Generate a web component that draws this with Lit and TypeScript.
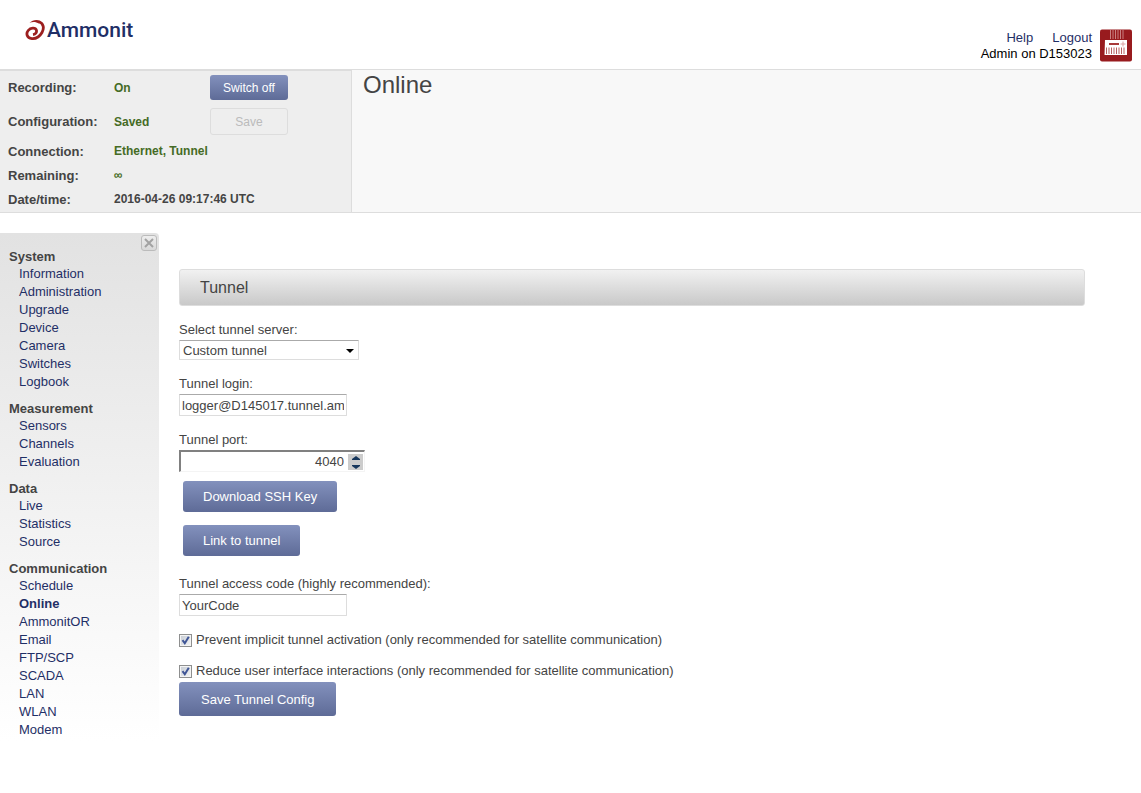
import { LitElement, html, css, svg } from "lit";
import { customElement, property, state } from "lit/decorators.js";

interface NavGroup {
  title: string;
  items: string[];
}

const NAV: NavGroup[] = [
  {
    title: "System",
    items: ["Information", "Administration", "Upgrade", "Device", "Camera", "Switches", "Logbook"],
  },
  { title: "Measurement", items: ["Sensors", "Channels", "Evaluation"] },
  { title: "Data", items: ["Live", "Statistics", "Source"] },
  {
    title: "Communication",
    items: ["Schedule", "Online", "AmmonitOR", "Email", "FTP/SCP", "SCADA", "LAN", "WLAN", "Modem"],
  },
];

const buttonStyles = css`
  .btn {
    box-sizing: border-box;
    border: 1px solid transparent;
    border-radius: 3px;
    background: linear-gradient(#8391bd, #5e6b97) border-box;
    color: #fff;
    font-family: inherit;
    font-size: 13px;
    line-height: 15px;
    padding: 7px 19px;
    cursor: pointer;
  }
  .btn.small {
    font-size: 12px;
    padding: 5px 0 3px;
  }
  .btn.small:disabled {
    padding: 6px 0 4px;
    background: #eeeeee;
    border-color: #dddddd;
    color: #bbbbbb;
    cursor: default;
  }
`;

@customElement("page-header")
class PageHeader extends LitElement {
  static styles = css`
    .bar {
      display: flex;
      justify-content: space-between;
      align-items: flex-start;
      min-height: 70px;
      padding: 0 9px 0 25px;
      box-sizing: border-box;
      border-bottom: 1px solid #dddddd;
    }
    a {
      color: #1f2f66;
      text-decoration: none;
    }
    .logo {
      display: flex;
      align-items: center;
      gap: 2px;
      padding-top: 16px;
      font: 500 21px/28px Roboto, "Open Sans", sans-serif;
    }
    .user {
      display: flex;
      gap: 8px;
      padding-top: 29px;
      line-height: 16px;
      color: #000;
    }
    .lines {
      padding-top: 1px;
      text-align: right;
    }
    .links {
      display: flex;
      justify-content: flex-end;
      gap: 19px;
    }
    svg {
      display: block;
    }
  `;

  render() {
    return html`
      <header class="bar">
        <a class="logo" href="#">
          <svg width="20" height="22" viewBox="0 0 20 22" aria-hidden="true">
            <path
              fill="none"
              stroke="#9c1f1f"
              stroke-width="2.800"
              d="M14 2.800C18.500 4.500 19.500 9 17 13.500C14.500 17.800 10.500 20 6.800 19.600C1.800 19.200 .8 14.500 3.200 11.500C5.500 8.600 10.500 8.200 11.400 11.200C12 13.500 10.500 15.200 8 15.600"
            />
            <path fill="#9c1f1f" d="M4.500 3.800C7.500 .8 12 0 15.500 2L14 4.600C11 2.600 7.500 2.600 4.500 3.800z" />
          </svg>
          Ammonit
        </a>
        <div class="user">
          <div class="lines">
            <nav class="links"><a href="#">Help</a><a href="#">Logout</a></nav>
            <div>Admin on D153023</div>
          </div>
          <svg width="32" height="33" viewBox="0 0 32 33" aria-hidden="true">
            <rect x="0" y="0.500" width="32" height="32" rx="2" fill="#981b1e" />
            ${[10.5, 13, 15.5, 18, 20.5, 23].map(
              (x) => svg`<path d="M${x} 1V10" stroke="#c98080" stroke-width="1" />`
            )}
            <path fill="#fff" d="M5 11h22v15H4.500z" />
            <path d="M9 15h10" stroke="#a83a3a" stroke-width="2" />
            <path d="M20.500 15h5M23 12.500v5" stroke="#d9a0a0" stroke-width="1" />
            ${[6.5, 9, 11.5, 14, 16.5, 19, 21.5, 24].map(
              (x) => svg`<path d="M${x} 18.500V25" stroke="#b86060" stroke-width="1" />`
            )}
          </svg>
        </div>
      </header>
    `;
  }
}

@customElement("status-panel")
class StatusPanel extends LitElement {
  static styles = [
    buttonStyles,
    css`
      .panel {
        display: grid;
        grid-template-columns: 106px 96px 78px;
        grid-template-rows: 25px 8px 27px 4px repeat(3, 24px);
        align-items: center;
        width: 352px;
        padding: 4px 0 1px 8px;
        box-sizing: border-box;
        height: 100%;
        border: solid #dddddd;
        border-width: 1px 1px 0 0;
        background: #eeeeee;
        margin: 0;
        font-weight: bold;
        line-height: 15px;
      }
      dt,
      dd {
        margin: 0;
      }
      dt {
        grid-column: 1;
      }
      dd {
        grid-column: 2 / 4;
        font-size: 12px;
        line-height: 16px;
      }
      .narrow {
        grid-column: 2;
      }
      .action {
        grid-column: 3;
        display: grid;
      }
      .good {
        color: #456b25;
      }
      .r1 {
        grid-row: 1;
      }
      .r2 {
        grid-row: 3;
      }
      .r3 {
        grid-row: 5;
      }
      .r4 {
        grid-row: 6;
      }
      .r5 {
        grid-row: 7;
      }
    `,
  ];

  render() {
    return html`
      <dl class="panel">
        <dt class="r1">Recording:</dt>
        <dd class="r1 narrow good">On</dd>
        <dd class="r1 action"><button class="btn small">Switch off</button></dd>
        <dt class="r2">Configuration:</dt>
        <dd class="r2 narrow good">Saved</dd>
        <dd class="r2 action"><button class="btn small" disabled>Save</button></dd>
        <dt class="r3">Connection:</dt>
        <dd class="r3 good">Ethernet, Tunnel</dd>
        <dt class="r4">Remaining:</dt>
        <dd class="r4 good">∞</dd>
        <dt class="r5">Date/time:</dt>
        <dd class="r5">2016-04-26 09:17:46 UTC</dd>
      </dl>
    `;
  }
}

@customElement("side-nav")
class SideNav extends LitElement {
  @property() current = "Online";

  static styles = css`
    .nav {
      position: relative;
      display: flex;
      flex-direction: column;
      gap: 10px;
      padding: 16px 9px 2px;
      border-radius: 0 4px 0 0;
      background: linear-gradient(#e2e2e2, #ffffff);
    }
    h2 {
      margin: 0;
      font-size: 13px;
      line-height: 16px;
    }
    ul {
      margin: 0;
      padding: 0 0 0 10px;
      list-style: none;
      line-height: 18px;
    }
    a {
      color: #1f2f66;
      text-decoration: none;
    }
    .current {
      font-weight: bold;
    }
    .close {
      position: absolute;
      top: 2px;
      right: 2px;
      width: 16px;
      height: 16px;
      padding: 0;
      display: grid;
      place-items: center;
      border: 1px solid #bbbbbb;
      border-radius: 3px;
      background: linear-gradient(#eeeeee, #d8d8d8);
    }
  `;

  render() {
    return html`
      <nav class="nav">
        <button class="close" aria-label="Close">
          <svg width="10" height="10" viewBox="0 0 10 10">
            <path d="M1 1L9 9M9 1L1 9" stroke="#a2a2a2" stroke-width="2" />
          </svg>
        </button>
        ${NAV.map(
          (group) => html`
            <section>
              <h2>${group.title}</h2>
              <ul>
                ${group.items.map(
                  (item) => html`<li>
                    <a href="#" class=${item === this.current ? "current" : ""}>${item}</a>
                  </li>`
                )}
              </ul>
            </section>
          `
        )}
      </nav>
    `;
  }
}

@customElement("tunnel-form")
class TunnelForm extends LitElement {
  @state() port = 4040;

  static styles = [
    buttonStyles,
    css`
      h2 {
        margin: 0;
        padding: 0 20px;
        border: 1px solid #dddddd;
        border-radius: 3px;
        background: linear-gradient(#f1f1f1, #c9c9c9);
        font-size: 16px;
        font-weight: normal;
        line-height: 35px;
      }
      form {
        display: flex;
        flex-direction: column;
        align-items: flex-start;
        gap: 14px;
        padding-top: 14px;
      }
      .field {
        display: flex;
        flex-direction: column;
        align-items: flex-start;
      }
      label {
        line-height: 20px;
      }
      input,
      select {
        box-sizing: border-box;
        margin: 0;
        font: inherit;
        color: #444444;
      }
      .text,
      select {
        border: 1px solid #dddddd;
        border-top-color: #aaaaaa;
        border-radius: 1px;
        background-color: #fff;
      }
      .text {
        width: 168px;
        height: 22px;
        padding: 1px 2px;
      }
      select {
        appearance: none;
        width: 180px;
        height: 20px;
        padding: 0 20px 0 3px;
        background-image: url("data:image/svg+xml,%3Csvg xmlns='http://www.w3.org/2000/svg' width='8' height='4'%3E%3Cpath d='M0 0h8L4 4z'/%3E%3C/svg%3E");
        background-repeat: no-repeat;
        background-position: right 4px top 8px;
      }
      .spin {
        display: flex;
        align-items: center;
        box-sizing: border-box;
        width: 186px;
        height: 22px;
        border: solid;
        border-width: 2px 1px 1px 2px;
        border-color: #808080 #f4f4f4 #f4f4f4 #808080;
      }
      .port {
        flex: 1;
        min-width: 0;
        border: 0;
        padding: 0 4px;
        text-align: right;
        appearance: textfield;
        background: none;
        outline: none;
      }
      .port::-webkit-inner-spin-button {
        appearance: none;
      }
      .steps {
        display: grid;
        grid-template-rows: 8px 8px;
        width: 15px;
        margin-right: 1px;
        background: #cccccc;
      }
      .steps button {
        display: grid;
        place-items: center;
        border: 0;
        padding: 0;
        background: none;
      }
      .links {
        display: flex;
        flex-direction: column;
        align-items: flex-start;
        gap: 13px;
        margin: -5px 0 4px;
        padding-left: 4px;
      }
      .checks {
        display: grid;
        gap: 11px;
      }
      .check {
        display: flex;
        align-items: center;
        gap: 4px;
      }
      .check input {
        appearance: none;
        width: 13px;
        height: 13px;
        margin-top: 1px;
        border: 1px solid #8e8f8f;
        background: linear-gradient(135deg, #c4cad2, #f6f6f6);
        box-shadow: inset 0 0 0 1px #f4f4f4;
      }
      .check input:checked {
        background-image: url("data:image/svg+xml,%3Csvg xmlns='http://www.w3.org/2000/svg' width='11' height='11'%3E%3Cpath d='M2.500 5.200L4.800 8.300L8.800 1.800' fill='none' stroke='%233f5596' stroke-width='2'/%3E%3C/svg%3E"),
          linear-gradient(135deg, #c4cad2, #f6f6f6);
      }
      .save {
        padding: 9px 21px 8px;
        margin-top: 1px;
      }
    `,
  ];

  private step(by: number) {
    this.port += by;
  }

  render() {
    return html`
      <h2>Tunnel</h2>
      <form @submit=${(e: Event) => e.preventDefault()}>
        <div class="field">
          <label for="server">Select tunnel server:</label>
          <select id="server">
            <option>Custom tunnel</option>
          </select>
        </div>
        <div class="field">
          <label for="login">Tunnel login:</label>
          <input class="text" id="login" value="logger@D145017.tunnel.ammonit.com" />
        </div>
        <div class="field">
          <label for="port">Tunnel port:</label>
          <div class="spin">
            <input class="port" id="port" type="number" .value=${String(this.port)} />
            <div class="steps">
              <button type="button" aria-label="Increase" @click=${() => this.step(1)}>
                <svg width="8" height="6"><path d="M0 5V4L4 1L8 4V5z" fill="#16365c" /></svg>
              </button>
              <button type="button" aria-label="Decrease" @click=${() => this.step(-1)}>
                <svg width="8" height="6"><path d="M0 2V3L4 6L8 3V2z" fill="#16365c" /></svg>
              </button>
            </div>
          </div>
        </div>
        <div class="links">
          <button type="button" class="btn">Download SSH Key</button>
          <button type="button" class="btn">Link to tunnel</button>
        </div>
        <div class="field">
          <label for="code">Tunnel access code (highly recommended):</label>
          <input class="text" id="code" value="YourCode" />
        </div>
        <div>
          <div class="checks">
            <div class="check">
              <input type="checkbox" id="prevent" checked />
              <label for="prevent"
                >Prevent implicit tunnel activation (only recommended for satellite communication)</label
              >
            </div>
            <div class="check">
              <input type="checkbox" id="reduce" checked />
              <label for="reduce"
                >Reduce user interface interactions (only recommended for satellite communication)</label
              >
            </div>
          </div>
          <button class="btn save">Save Tunnel Config</button>
        </div>
      </form>
    `;
  }
}

@customElement("app-root")
class AppRoot extends LitElement {
  static styles = css`
    :host {
      display: block;
      min-height: 100vh;
      background: #fff;
      color: #444444;
      font-family: "Liberation Sans", Arial, sans-serif;
      font-size: 13px;
    }
    .band {
      display: flex;
      background: #f8f8f8;
      border-bottom: 1px solid #dddddd;
    }
    h1 {
      margin: 0;
      padding: 0 11px;
      font-size: 24px;
      font-weight: normal;
      line-height: 30px;
    }
    .body {
      display: grid;
      grid-template-columns: 159px minmax(0, 1fr);
      gap: 20px;
      align-items: start;
      padding: 20px 56px 20px 0;
    }
    .content {
      padding-top: 36px;
    }
  `;

  render() {
    return html`
      <page-header></page-header>
      <div class="band">
        <status-panel></status-panel>
        <h1>Online</h1>
      </div>
      <div class="body">
        <side-nav current="Online"></side-nav>
        <main class="content"><tunnel-form></tunnel-form></main>
      </div>
    `;
  }
}
